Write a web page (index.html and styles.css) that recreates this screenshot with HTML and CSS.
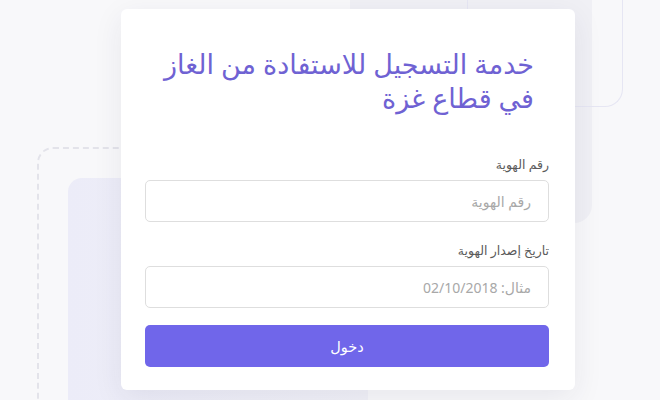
FILE: index.html
```html
<!DOCTYPE html>
<html lang="ar" dir="rtl">
<head>
<meta charset="utf-8">
<link rel="stylesheet" href="styles.css">
</head>
<body>
<div class="bg">
  <div class="deco deco-gray"></div>
  <div class="deco deco-outline"></div>
  <div class="deco deco-dashed"></div>
  <div class="deco deco-lav"></div>
</div>
<main class="card">
  <h1 class="title">خدمة التسجيل للاستفادة من الغاز في قطاع غزة</h1>
  <form class="form">
    <label class="field">
      <span class="label">رقم الهوية</span>
      <input class="input" type="text" placeholder="رقم الهوية">
    </label>
    <label class="field">
      <span class="label">تاريخ إصدار الهوية</span>
      <input class="input" type="text" placeholder="مثال: 02/10/2018">
    </label>
    <button class="btn" type="button">دخول</button>
  </form>
</main>
</body>
</html>
```
FILE: styles.css
```css
* { box-sizing: border-box; }
html, body { margin: 0; padding: 0; }
body {
  width: 660px;
  height: 400px;
  overflow: hidden;
  background: #f8f8fa;
  font-family: "Noto Sans", "DejaVu Sans", sans-serif;
  position: relative;
  direction: rtl;
}
.bg { position: absolute; inset: 0; z-index: 0; overflow: hidden; }
.deco { position: absolute; }
.deco-gray {
  left: 350px; top: 0; width: 242px; height: 223px;
  background: #f0f0f5;
  border-radius: 0 0 18px 0;
}
.deco-outline {
  left: 467px; top: 0; width: 156px; height: 107px;
  border: 1.5px solid #e6e6f3;
  border-top: none;
  border-radius: 0 0 18px 0;
}
.deco-dashed {
  left: 37px; top: 147px; width: 300px; bottom: 0;
  border: 2px dashed #e3e3ea;
  border-right: none;
  border-bottom: none;
  border-radius: 16px 0 0 0;
}
.deco-lav {
  left: 68px; top: 178px; width: 300px; bottom: 0;
  background: linear-gradient(90deg, #ececf8, #f1f1f7);
  border-radius: 14px 0 0 0;
}
.card {
  position: relative;
  z-index: 1;
  width: 454px;
  height: 381px;
  margin: 9px 85px 0 121px;
  background: #fff;
  border-radius: 6px;
  box-shadow: 0 8px 30px rgba(40, 40, 80, 0.08);
  padding: 38px 26px 0 24px;
}
.title {
  margin: 0 15px 0 0;
  font-size: 27px;
  line-height: 34px;
  font-weight: 500;
  color: #6f62d3;
  text-align: right;
}
.form { margin-top: 41px; display: flex; flex-direction: column; }
.field { display: flex; flex-direction: column; }
.label {
  font-size: 12.5px;
  color: #5a5a5a;
  line-height: 18px;
  margin-bottom: 6px;
}
.input {
  height: 42px;
  width: 100%;
  border: 1px solid #dedede;
  border-radius: 5px;
  padding: 0 17px;
  font-family: inherit;
  font-size: 14px;
  direction: rtl;
  background: #fff;
  margin-bottom: 20px;
}
.input::placeholder { color: #a8a8a8; }
.btn {
  height: 42px;
  width: 100%;
  border: none;
  border-radius: 5px;
  background: #7066ea;
  color: #fff;
  font-family: inherit;
  font-size: 14.5px;
  margin-top: -3px;
}
```
